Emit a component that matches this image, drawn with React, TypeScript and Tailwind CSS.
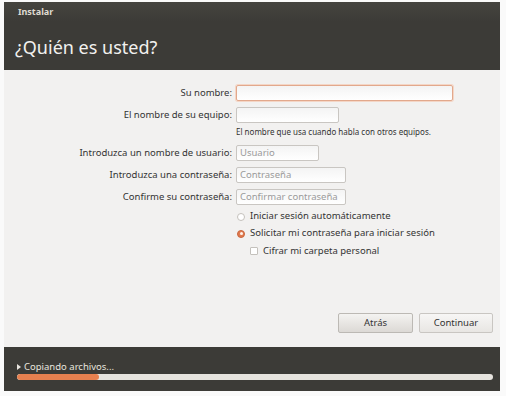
import React from "react";

const font = { fontFamily: '"Noto Sans", "Open Sans", sans-serif' };

function Field({ w, placeholder, focus }: { w: string; placeholder?: string; focus?: boolean }) {
  return (
    <div
      className={`h-[16px] ${w} rounded-[2px] border bg-gradient-to-b from-[#f4f4f4] to-[#ffffff] flex items-center px-[3px] text-[9.5px] text-[#9a9a9a] ${
        focus ? "border-[#e2a88c] shadow-[0_0_0_1px_#f4d6c6]" : "border-[#c9c6c2]"
      }`}
    >
      {placeholder}
    </div>
  );
}

export default function App() {
  return (
    <div className="w-[506px] h-[396px] bg-[#fafafa] pt-[2px] pl-[4px]" style={font}>
      <div className="w-[496px] h-[389px] flex flex-col bg-[#f2f1f0]">
        {/* Header */}
        <div className="h-[68px] bg-[#3c3b37] flex flex-col">
          <div className="h-[20px] bg-gradient-to-b from-[#45443f] to-[#3c3b37] flex items-center pl-[14px] text-[9px] font-bold text-[#dfdbd2]">
            Instalar
          </div>
          <div className="pl-[11px] pt-[14px] text-[18px] leading-[22px] text-[#f2f1ef]">¿Quién es usted?</div>
        </div>

        {/* Body */}
        <div className="flex-1 flex flex-col pt-[15px]">
          <div className="grid grid-cols-[228px_auto] gap-x-[4px] items-center text-[9.5px] text-[#333333]">
            <div className="text-right">Su nombre:</div>
            <Field w="w-[217px]" focus />
            <div className="text-right mt-[6px]">El nombre de su equipo:</div>
            <div className="mt-[6px]"><Field w="w-[103px]" /></div>
            <div />
            <div className="text-[8px] mt-[3px] h-[12px] leading-[12px]">El nombre que usa cuando habla con otros equipos.</div>
            <div className="text-right mt-[7px]">Introduzca un nombre de usuario:</div>
            <div className="mt-[7px]"><Field w="w-[83px]" placeholder="Usuario" /></div>
            <div className="text-right mt-[6px]">Introduzca una contraseña:</div>
            <div className="mt-[6px]"><Field w="w-[110px]" placeholder="Contraseña" /></div>
            <div className="text-right mt-[6px]">Confirme su contraseña:</div>
            <div className="mt-[6px]"><Field w="w-[110px]" placeholder="Confirmar contraseña" /></div>
          </div>

          <div className="ml-[233px] mt-[3px] flex flex-col text-[9.5px] text-[#333333]">
            <div className="h-[17px] flex items-center gap-[5px]">
              <span className="w-[8px] h-[8px] rounded-full border border-[#c4c1bc] bg-white" />
              <span>Iniciar sesión automáticamente</span>
            </div>
            <div className="h-[17px] flex items-center gap-[5px]">
              <span className="w-[8px] h-[8px] rounded-full border border-[#c9663d] bg-[#e07a4f] flex items-center justify-center">
                <span className="w-[3px] h-[3px] rounded-full bg-[#fff3ec]" />
              </span>
              <span>Solicitar mi contraseña para iniciar sesión</span>
            </div>
            <div className="h-[18px] flex items-center gap-[5px] pl-[13px]">
              <span className="w-[8px] h-[8px] rounded-[1px] border border-[#c4c1bc] bg-white" />
              <span>Cifrar mi carpeta personal</span>
            </div>
          </div>

          <div className="flex-1" />
          <div className="flex justify-end gap-[6px] pr-[7px] pb-[14px] text-[9.5px] text-[#333333]">
            <div className="w-[75px] h-[20px] rounded-[2px] border border-[#bcb9b4] bg-gradient-to-b from-[#f4f3f1] to-[#dcd9d5] flex items-center justify-center">
              Atrás
            </div>
            <div className="w-[74px] h-[20px] rounded-[2px] border border-[#c9c6c2] bg-gradient-to-b from-[#f7f6f5] to-[#e8e6e3] flex items-center justify-center">
              Continuar
            </div>
          </div>
        </div>

        {/* Footer */}
        <div className="h-[44px] bg-[#3c3b37] flex flex-col px-[13px] pt-[14px]">
          <div className="flex items-center gap-[3px] text-[9.5px] text-[#e8e5df] leading-[12px]">
            <span className="w-0 h-0 border-y-[3px] border-y-transparent border-l-[4px] border-l-[#e8e5df]" />
            <span>Copiando archivos...</span>
          </div>
          <div className="mt-[1px] h-[6px] w-[476px] rounded-full bg-[#e6e3de] overflow-hidden">
            <div className="h-full w-[82px] rounded-full bg-[#e7804f]" />
          </div>
        </div>
      </div>
    </div>
  );
}
